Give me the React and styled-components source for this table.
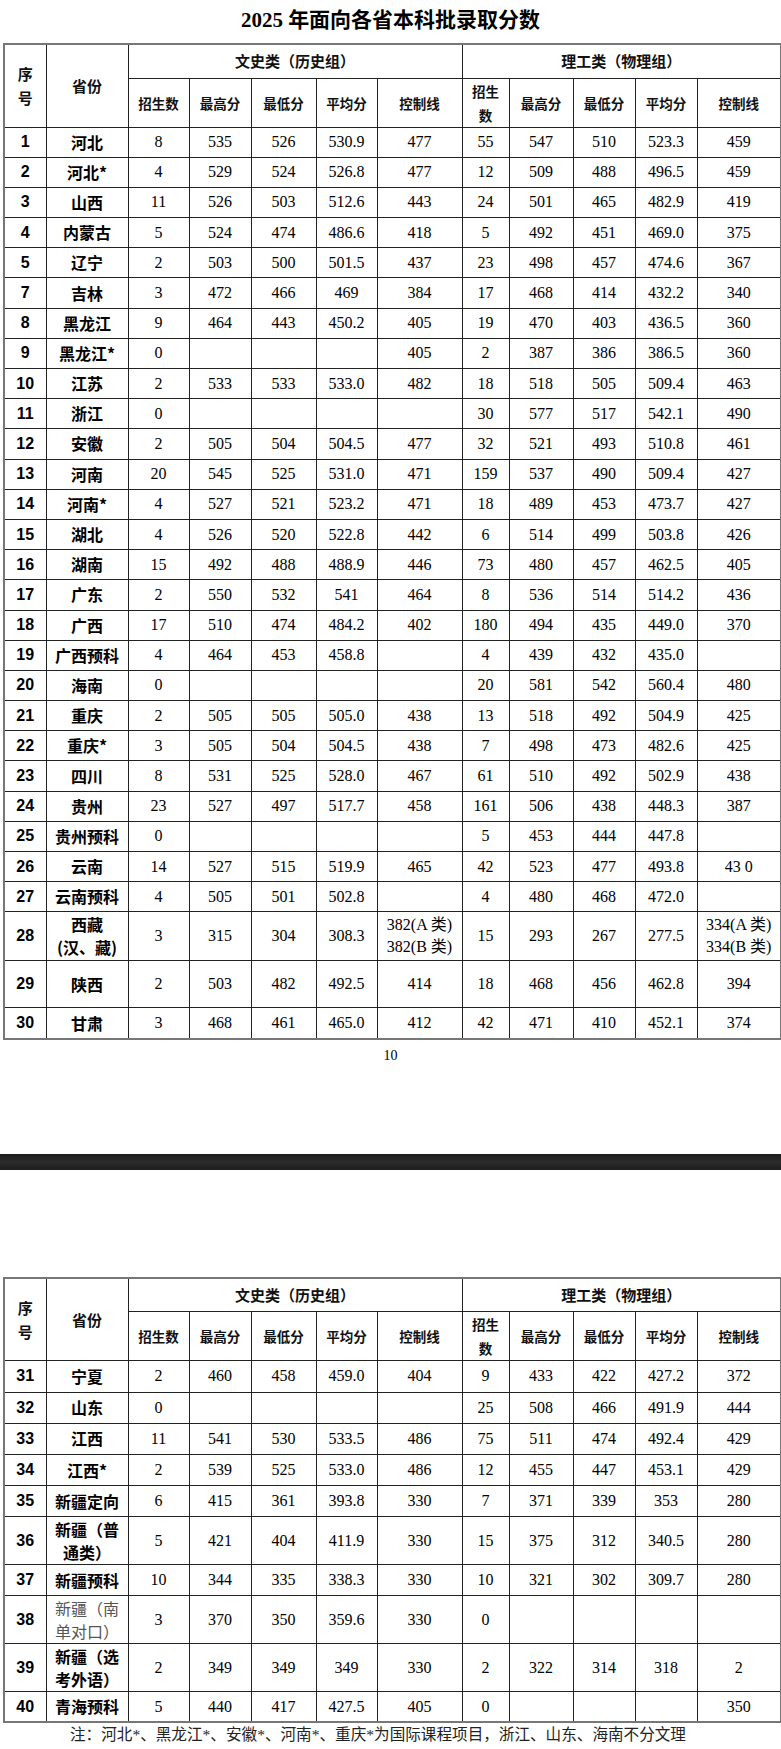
import React from 'react';
import styled, { createGlobalStyle } from 'styled-components';

const GlobalStyle = createGlobalStyle`
  html, body {
    margin: 0;
    padding: 0;
    background: #fff;
  }
  body {
    font-family: "Liberation Serif", "Noto Sans CJK SC", serif;
    color: #000;
  }
`;

const Page = styled.div`
  display: flex;
  flex-direction: column;
  width: 781px;
`;

const Title = styled.h1`
  margin: 0;
  height: 43px;
  line-height: 40px;
  text-align: center;
  font-family: "Liberation Serif", "Noto Sans CJK SC", serif;
  font-size: 21px;
  font-weight: 700;
`;

const Table = styled.table`
  margin-left: 3px;
  width: 777px;
  table-layout: fixed;
  border-collapse: collapse;
  border: 2px solid #777;
`;

const Row = styled.tr`
  height: ${(p) => p.$h || 30.2}px;
`;

const Head = styled.th`
  border: 1px solid #222;
  padding: 0;
  text-align: center;
  vertical-align: middle;
  font-family: "Noto Sans CJK SC", sans-serif;
  font-weight: 700;
  font-size: ${(p) => p.$size || 13.5}px;
  line-height: 24px;
  color: #111;
`;

const Num = styled.td`
  border: 1px solid #222;
  padding: 0;
  text-align: center;
  vertical-align: middle;
  font-family: "Liberation Sans Narrow", "Liberation Sans", sans-serif;
  font-weight: 700;
  font-size: 16px;
`;

const Prov = styled.td`
  border: 1px solid #222;
  padding: 0 2px;
  text-align: center;
  vertical-align: middle;
  font-family: "Noto Sans CJK SC", sans-serif;
  font-weight: ${(p) => (p.$light ? 400 : 700)};
  color: ${(p) => (p.$light ? '#555' : '#000')};
  font-size: 16px;
  line-height: 23px;
  white-space: nowrap;
`;

const Val = styled.td`
  border: 1px solid #222;
  padding: 0;
  text-align: center;
  vertical-align: middle;
  font-family: "Liberation Serif", "Noto Sans CJK SC", serif;
  font-size: 16px;
  line-height: 22px;
  white-space: nowrap;
`;

const PageNumber = styled.div`
  height: 32px;
  line-height: 32px;
  text-align: center;
  font-family: "Liberation Serif", serif;
  font-size: 14px;
`;

const Divider = styled.div`
  margin-top: 82px;
  height: 16px;
  background: linear-gradient(#1d1d1d, #2b2b2b 50%, #1d1d1d);
`;

const Gap = styled.div`
  height: 107px;
`;

const Note = styled.p`
  margin: 0;
  padding: 0 0 0 70px;
  font-family: "Liberation Serif", "Noto Sans CJK SC", serif;
  font-size: 15.6px;
  line-height: 24px;
  color: #222;
  white-space: nowrap;
`;

const widths = [42, 82, 61, 62, 65, 61, 85, 47, 64, 62, 62, 84];

const page1 = [
  ['1', '河北', '8', '535', '526', '530.9', '477', '55', '547', '510', '523.3', '459'],
  ['2', '河北*', '4', '529', '524', '526.8', '477', '12', '509', '488', '496.5', '459'],
  ['3', '山西', '11', '526', '503', '512.6', '443', '24', '501', '465', '482.9', '419'],
  ['4', '内蒙古', '5', '524', '474', '486.6', '418', '5', '492', '451', '469.0', '375'],
  ['5', '辽宁', '2', '503', '500', '501.5', '437', '23', '498', '457', '474.6', '367'],
  ['7', '吉林', '3', '472', '466', '469', '384', '17', '468', '414', '432.2', '340'],
  ['8', '黑龙江', '9', '464', '443', '450.2', '405', '19', '470', '403', '436.5', '360'],
  ['9', '黑龙江*', '0', '', '', '', '405', '2', '387', '386', '386.5', '360'],
  ['10', '江苏', '2', '533', '533', '533.0', '482', '18', '518', '505', '509.4', '463'],
  ['11', '浙江', '0', '', '', '', '', '30', '577', '517', '542.1', '490'],
  ['12', '安徽', '2', '505', '504', '504.5', '477', '32', '521', '493', '510.8', '461'],
  ['13', '河南', '20', '545', '525', '531.0', '471', '159', '537', '490', '509.4', '427'],
  ['14', '河南*', '4', '527', '521', '523.2', '471', '18', '489', '453', '473.7', '427'],
  ['15', '湖北', '4', '526', '520', '522.8', '442', '6', '514', '499', '503.8', '426'],
  ['16', '湖南', '15', '492', '488', '488.9', '446', '73', '480', '457', '462.5', '405'],
  ['17', '广东', '2', '550', '532', '541', '464', '8', '536', '514', '514.2', '436'],
  ['18', '广西', '17', '510', '474', '484.2', '402', '180', '494', '435', '449.0', '370'],
  ['19', '广西预科', '4', '464', '453', '458.8', '', '4', '439', '432', '435.0', ''],
  ['20', '海南', '0', '', '', '', '', '20', '581', '542', '560.4', '480'],
  ['21', '重庆', '2', '505', '505', '505.0', '438', '13', '518', '492', '504.9', '425'],
  ['22', '重庆*', '3', '505', '504', '504.5', '438', '7', '498', '473', '482.6', '425'],
  ['23', '四川', '8', '531', '525', '528.0', '467', '61', '510', '492', '502.9', '438'],
  ['24', '贵州', '23', '527', '497', '517.7', '458', '161', '506', '438', '448.3', '387'],
  ['25', '贵州预科', '0', '', '', '', '', '5', '453', '444', '447.8', ''],
  ['26', '云南', '14', '527', '515', '519.9', '465', '42', '523', '477', '493.8', '43 0'],
  ['27', '云南预科', '4', '505', '501', '502.8', '', '4', '480', '468', '472.0', ''],
  ['28', ['西藏', '(汉、藏)'], '3', '315', '304', '308.3', ['382(A 类)', '382(B 类)'], '15', '293', '267', '277.5', ['334(A 类)', '334(B 类)'], 49],
  ['29', '陕西', '2', '503', '482', '492.5', '414', '18', '468', '456', '462.8', '394', 47],
  ['30', '甘肃', '3', '468', '461', '465.0', '412', '42', '471', '410', '452.1', '374', 31],
];

const page2 = [
  ['31', '宁夏', '2', '460', '458', '459.0', '404', '9', '433', '422', '427.2', '372', 31.2],
  ['32', '山东', '0', '', '', '', '', '25', '508', '466', '491.9', '444', 31.2],
  ['33', '江西', '11', '541', '530', '533.5', '486', '75', '511', '474', '492.4', '429', 31.2],
  ['34', '江西*', '2', '539', '525', '533.0', '486', '12', '455', '447', '453.1', '429', 31.2],
  ['35', '新疆定向', '6', '415', '361', '393.8', '330', '7', '371', '339', '353', '280', 31.2],
  ['36', ['新疆（普', '通类）'], '5', '421', '404', '411.9', '330', '15', '375', '312', '340.5', '280', 48],
  ['37', '新疆预科', '10', '344', '335', '338.3', '330', '10', '321', '302', '309.7', '280', 31],
  ['38', ['新疆（南', '单对口）'], '3', '370', '350', '359.6', '330', '0', '', '', '', '', 48, true],
  ['39', ['新疆（选', '考外语）'], '2', '349', '349', '349', '330', '2', '322', '314', '318', '2', 48],
  ['40', '青海预科', '5', '440', '417', '427.5', '405', '0', '', '', '', '350', 30],
];

const Lines = ({ value }) =>
  Array.isArray(value)
    ? value.map((line, i) => (
        <React.Fragment key={i}>
          {i > 0 && <br />}
          {line}
        </React.Fragment>
      ))
    : value;

const ScoreTable = ({ rows, headHeight }) => (
  <Table>
    <colgroup>
      {widths.map((w, i) => (
        <col key={i} style={{ width: w }} />
      ))}
    </colgroup>
    <thead>
      <Row $h={34}>
        <Head rowSpan={2} $size={15}>
          序<br />号
        </Head>
        <Head rowSpan={2} $size={15}>
          省份
        </Head>
        <Head colSpan={5} $size={15}>
          文史类（历史组）
        </Head>
        <Head colSpan={5} $size={15}>
          理工类（物理组）
        </Head>
      </Row>
      <Row $h={headHeight}>
        <Head>招生数</Head>
        <Head>最高分</Head>
        <Head>最低分</Head>
        <Head>平均分</Head>
        <Head>控制线</Head>
        <Head>
          招生<br />数
        </Head>
        <Head>最高分</Head>
        <Head>最低分</Head>
        <Head>平均分</Head>
        <Head>控制线</Head>
      </Row>
    </thead>
    <tbody>
      {rows.map((r) => {
        const [no, prov, ...rest] = r;
        const cells = rest.slice(0, 10);
        const h = rest[10];
        const light = rest[11];
        return (
          <Row key={no} $h={h}>
            <Num>{no}</Num>
            <Prov $light={light}>
              <Lines value={prov} />
            </Prov>
            {cells.map((c, i) => (
              <Val key={i}>
                <Lines value={c} />
              </Val>
            ))}
          </Row>
        );
      })}
    </tbody>
  </Table>
);

const App = () => (
  <Page>
    <GlobalStyle />
    <Title>2025 年面向各省本科批录取分数</Title>
    <ScoreTable rows={page1} headHeight={47} />
    <PageNumber>10</PageNumber>
    <Divider />
    <Gap />
    <ScoreTable rows={page2} headHeight={48} />
    <Note>
      注：河北*、黑龙江*、安徽*、河南*、重庆*为国际课程项目，浙江、山东、海南不分文理
      <br />
      招生。
    </Note>
  </Page>
);

export default App;
